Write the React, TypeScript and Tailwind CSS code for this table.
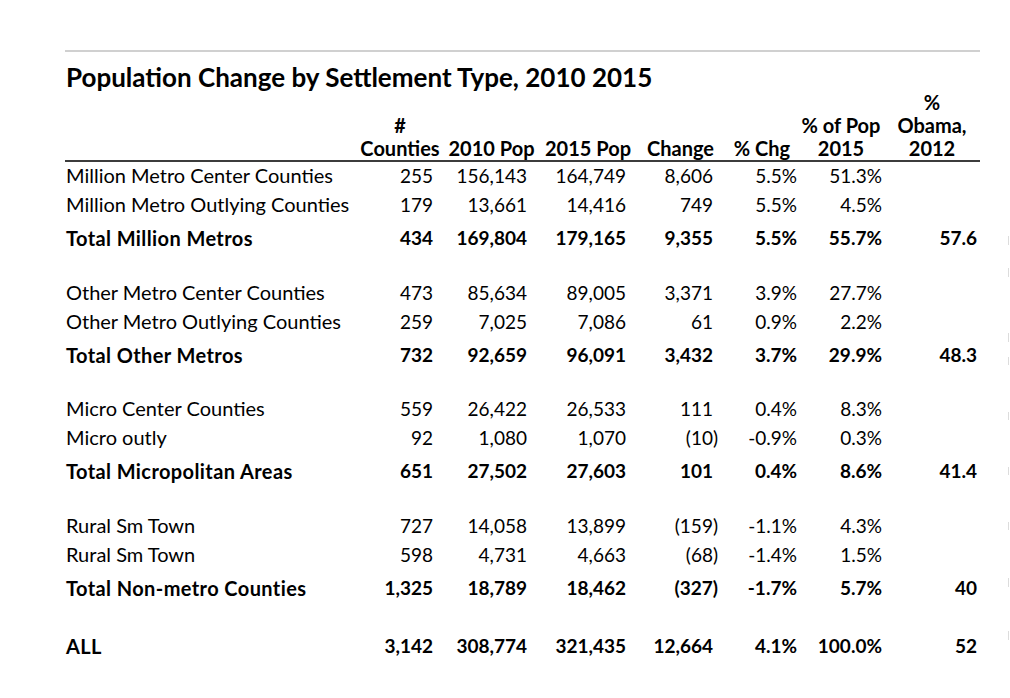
import React from "react";

type Row = { label: string; v: string[]; total?: boolean };

const sections: Row[][] = [
  [
    { label: "Million Metro Center Counties", v: ["255", "156,143", "164,749", "8,606", "5.5%", "51.3%", ""] },
    { label: "Million Metro Outlying Counties", v: ["179", "13,661", "14,416", "749", "5.5%", "4.5%", ""] },
    { label: "Total Million Metros", v: ["434", "169,804", "179,165", "9,355", "5.5%", "55.7%", "57.6"], total: true },
  ],
  [
    { label: "Other Metro Center Counties", v: ["473", "85,634", "89,005", "3,371", "3.9%", "27.7%", ""] },
    { label: "Other Metro Outlying Counties", v: ["259", "7,025", "7,086", "61", "0.9%", "2.2%", ""] },
    { label: "Total Other Metros", v: ["732", "92,659", "96,091", "3,432", "3.7%", "29.9%", "48.3"], total: true },
  ],
  [
    { label: "Micro Center Counties", v: ["559", "26,422", "26,533", "111", "0.4%", "8.3%", ""] },
    { label: "Micro outly", v: ["92", "1,080", "1,070", "(10)", "-0.9%", "0.3%", ""] },
    { label: "Total Micropolitan Areas", v: ["651", "27,502", "27,603", "101", "0.4%", "8.6%", "41.4"], total: true },
  ],
  [
    { label: "Rural Sm Town", v: ["727", "14,058", "13,899", "(159)", "-1.1%", "4.3%", ""] },
    { label: "Rural Sm Town", v: ["598", "4,731", "4,663", "(68)", "-1.4%", "1.5%", ""] },
    { label: "Total Non-metro Counties", v: ["1,325", "18,789", "18,462", "(327)", "-1.7%", "5.7%", "40"], total: true },
  ],
];

const allRow: Row = {
  label: "ALL",
  v: ["3,142", "308,774", "321,435", "12,664", "4.1%", "100.0%", "52"],
  total: true,
};

// gap before each block, matching the blank sheet rows
const blockGap = ["", "mt-[21px]", "mt-[20px]", "mt-[21px]"];

const grid = "grid grid-cols-[293px_84px_99px_94px_91px_72px_86px_96px]";

// right padding per numeric column so the figures line up like the sheet
const pads = ["pr-[9px]", "pr-[14px]", "pr-[9px]", "pr-[13px]", "pr-[1px]", "pr-[2px]", "pr-[3px]"];

function cellPad(i: number, value: string) {
  if (i === 3 && value.startsWith("(")) return "pr-[8px]";
  return pads[i];
}

const headers: string[][] = [
  ["#", "Counties"],
  ["2010 Pop"],
  ["2015 Pop"],
  ["Change"],
  ["% Chg"],
  ["% of Pop", "2015"],
  ["%", "Obama,", "2012"],
];

function DataRow({ row }: { row: Row }) {
  return (
    <div
      className={`${grid} items-center pb-[2px] leading-[22px] ${row.total ? "h-[38px] font-bold" : "h-[29px]"}`}
    >
      <div
        className={`pl-px text-[20px] ${row.total ? "tracking-[0.4px]" : "-translate-y-px"}`}
      >
        {row.label}
      </div>
      {row.v.map((value, i) => (
        <div key={i} className={`text-right tabular-nums ${cellPad(i, value)}`}>
          {value}
        </div>
      ))}
    </div>
  );
}

const ticks = [
  "top-[236px] h-[9px]",
  "top-[268px] h-[9px]",
  "top-[333px] h-[9px]",
  "top-[357px] h-[8px]",
  "top-[412px] h-[8px]",
  "top-[467px] h-[8px]",
  "top-[522px] h-[8px]",
  "top-[578px] h-[9px]",
  "top-[631px] h-[9px]",
];

export default function App() {
  return (
    <div className="relative h-[698px] w-[1010px] overflow-hidden bg-white font-[Lato,sans-serif] text-[19px] text-black">
      <div className="ml-[65px] w-[915px] pt-[50px]">
        <div className="h-[2px] bg-[#d0d0d0]" />
        <h1 className="mt-[12px] h-[27px] pl-px text-[26px] font-bold leading-[27px]">
          Population Change by Settlement Type, 2010 2015
        </h1>

        <div className={`${grid} border-b-2 border-[#3c3c3c] text-[20px] font-bold leading-[23px]`}>
          <div />
          {headers.map((lines, i) => (
            <div key={i} className="flex h-[69px] flex-col items-center justify-end pt-px">
              {lines.map((line) => (
                <span key={line} className="whitespace-nowrap">
                  {line}
                </span>
              ))}
            </div>
          ))}
        </div>

        {sections.map((rows, s) => (
          <div key={s} className={blockGap[s]}>
            {rows.map((row, r) => (
              <DataRow key={r} row={row} />
            ))}
          </div>
        ))}

        <div className="mt-[20px]">
          <DataRow row={allRow} />
        </div>
      </div>

      {ticks.map((t) => (
        <span key={t} className={`absolute left-[1008px] w-px bg-[#dcdcdc] ${t}`} />
      ))}
    </div>
  );
}
